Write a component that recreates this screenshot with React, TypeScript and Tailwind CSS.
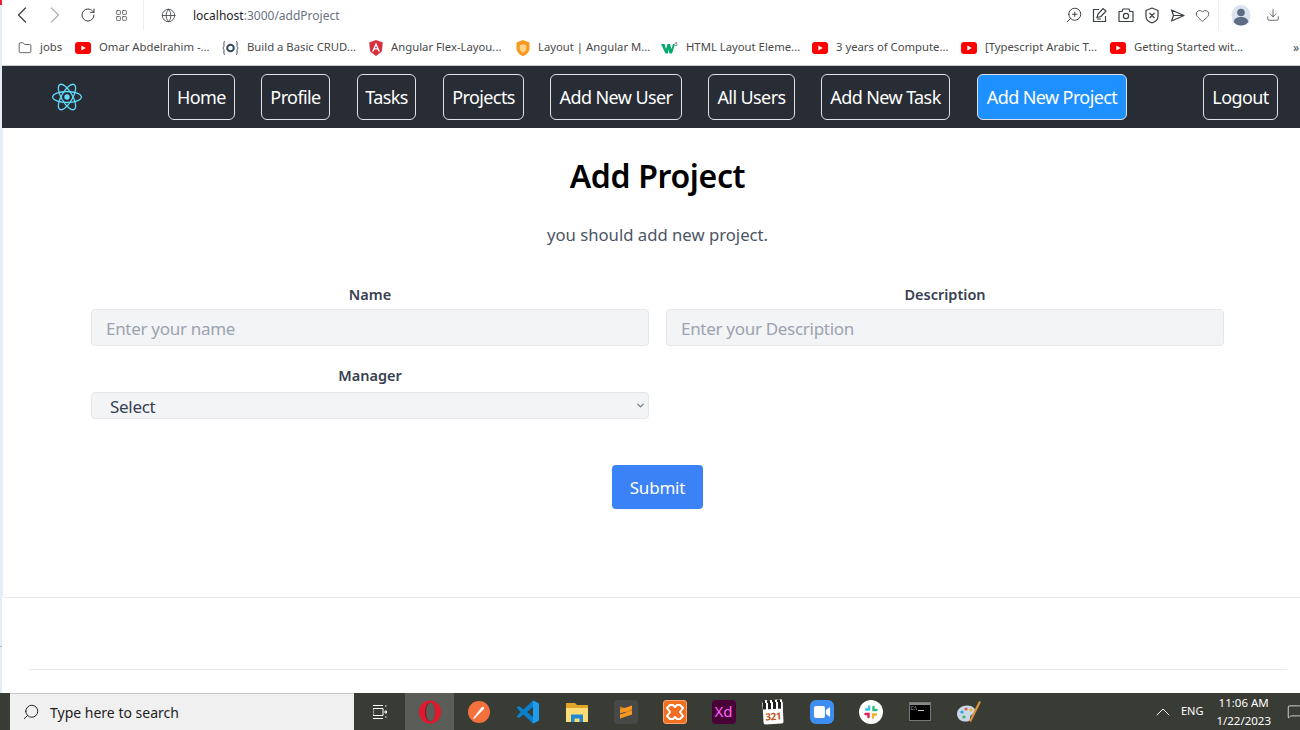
import React from "react";
import { ChevronLeft, ChevronRight, ChevronDown, RotateCw, LayoutGrid, Globe, Folder, ZoomIn, Heart, Download, Search, ChevronUp, MessageSquare } from "lucide-react";

const YT = () => (
  <svg width="16" height="12" viewBox="0 0 16 12" className="shrink-0">
    <rect width="16" height="12" rx="3" fill="#f00" />
    <path d="M6.3 3.4 10.8 6 6.3 8.6z" fill="#fff" />
  </svg>
);
const Crud = () => (
  <svg width="17" height="16" viewBox="0 0 17 16" className="shrink-0">
    <path d="M3 1.5C1.5 1.5 2 3 2 5.5 2 7 1.500 7.500.8 8c.7.500 1.200 1 1.200 2.500C2 13 1.500 14.500 3 14.500M14 1.500c1.500 0 1 1.500 1 4 0 1.500.5 2 1.200 2.500-.7.500-1.200 1-1.200 2.500 0 2.500.5 4-1 4" fill="none" stroke="#3c4858" strokeWidth="1" />
    <circle cx="8.500" cy="8" r="3.300" fill="none" stroke="#34495e" strokeWidth="2" />
  </svg>
);
const Ang = () => (
  <svg width="14" height="16" viewBox="0 0 14 16" className="shrink-0">
    <path d="M7 0 .2 2.400l1 9.200L7 16l5.800-4.400 1-9.200z" fill="#d6303c" />
    <path d="M7 2.500 3 11.500h1.600l.8-2h3.200l.8 2H11zM6 8.200l1-2.600 1 2.600z" fill="#fff" />
  </svg>
);
const Shield = () => (
  <svg width="14" height="16" viewBox="0 0 14 16" className="shrink-0">
    <path d="M7 0 .5 2.400v6C.5 12 4 15 7 16c3-1 6.500-4 6.500-7.600v-6z" fill="#f79a1f" />
    <path d="M7 4 3.800 5.500v3C3.800 10.500 5.500 12 7 12.500c1.500-.5 3.200-2 3.200-4v-3z" fill="#fcd58b" />
  </svg>
);
const W3 = () => (
  <svg width="17" height="12" viewBox="0 0 17 12" className="shrink-0">
    <path d="M0 2h3.500l1.500 5L6.500 2h2.500l1.500 5L12 2h2l-3 9.500H8.500L7.700 7.500 6.800 11.500H4.500z" fill="#04a96d" />
    <text x="13.500" y="4" fontSize="5" fill="#222" fontFamily="'Noto Sans',sans-serif">3</text>
  </svg>
);
const ReactLogo = () => (
  <svg width="30" height="30" viewBox="-11.500 -11.500 23 23" fill="none" stroke="#61dafb" strokeWidth="1">
    <circle r="2.050" fill="#61dafb" stroke="none" />
    <ellipse rx="11" ry="4.200" />
    <ellipse rx="11" ry="4.200" transform="rotate(60)" />
    <ellipse rx="11" ry="4.200" transform="rotate(120)" />
  </svg>
);

const bookmarks: [React.ReactNode, string, string][] = [
  [<Folder size={14} strokeWidth={1.300} color="#333" className="shrink-0" />, "jobs", "w-[57px]"],
  [<YT />, "Omar Abdelrahim -...", "w-[147px]"],
  [<Crud />, "Build a Basic CRUD...", "w-[147px]"],
  [<Ang />, "Angular Flex-Layou...", "w-[147px]"],
  [<Shield />, "Layout | Angular M...", "w-[145px]"],
  [<W3 />, "HTML Layout Eleme...", "w-[151px]"],
  [<YT />, "3 years of Compute...", "w-[149px]"],
  [<YT />, "[Typescript Arabic T...", "w-[149px]"],
  [<YT />, "Getting Started wit...", "w-[183px]"],
];

const navs: [string, string, string][] = [
  ["Home", "w-[67px]", "mr-[26px]"],
  ["Profile", "w-[69px]", "mr-[27px]"],
  ["Tasks", "w-[59px]", "mr-[27px]"],
  ["Projects", "w-[81px]", "mr-[26px]"],
  ["Add New User", "w-[132px]", "mr-[26px]"],
  ["All Users", "w-[87px]", "mr-[26px]"],
  ["Add New Task", "w-[129px]", "mr-[27px]"],
];

const Input = ({ label, ph }: { label: string; ph: string }) => (
  <div className="flex w-[558px] flex-col">
    <label className="mb-[5px] h-[20px] text-center text-[14.500px] font-semibold leading-[20px] text-[#374151]">{label}</label>
    <input
      readOnly
      placeholder={ph}
      className="h-[37px] w-full rounded-[4px] border border-[#e5e7eb] bg-[#f3f4f6] px-[14px] pt-[2px] text-[17px] tracking-[-0.3px] outline-none placeholder:text-[#9ca3af]"
    />
  </div>
);

const Tile = ({ children, active }: { children: React.ReactNode; active?: boolean }) => (
  <div className={`flex h-[37px] w-[49px] shrink-0 items-center justify-center ${active ? "bg-[#5b5d58]" : ""}`}>{children}</div>
);

export default function App() {
  return (
    <div className="relative flex h-[730px] w-[1300px] flex-col overflow-hidden bg-white font-['Noto_Sans',sans-serif]">
      <div className="absolute left-0 top-0 h-[5px] w-[2px] bg-[#ee1c3b]" />
      <div className="absolute left-0 top-[646px] h-px w-[2px] bg-[#b5b8bc]" />
      <div className="flex min-h-0 flex-1 flex-col border-l-[2px] border-[#e3edf7]">
        {/* toolbar */}
        <div className="flex h-[30px] shrink-0 items-center bg-white pl-[6px] pr-[20px] text-[#3c4043]">
          <ChevronLeft size={28} strokeWidth={1.100} />
          <ChevronRight size={28} strokeWidth={1.100} color="#b5b5b5" className="ml-[5px]" />
          <RotateCw size={16} strokeWidth={1.500} className="ml-[11px]" />
          <LayoutGrid size={13} strokeWidth={1.300} className="ml-[19px]" />
          <div className="ml-[15px] h-[30px] w-px bg-[#eee]" />
          <Globe size={15} strokeWidth={1.300} className="ml-[17px]" />
          <span className="ml-[17px] pt-[1px] text-[12px] text-[#222]">
            localhost<span className="text-[#6b7280]">:3000/addProject</span>
          </span>
          <div className="ml-auto flex items-center">
            <ZoomIn size={18} strokeWidth={1.300} className="-scale-x-100" />
            <svg width="16" height="16" viewBox="0 0 16 16" fill="none" stroke="#3c4043" strokeWidth="1.200" className="ml-[9px]">
              <path d="M7 2.500H1.500v12h12V9M5 10.500l1-3.500 5-5.500 3 2.500-5 5.500zM9 12H5" />
            </svg>
            <svg width="16" height="16" viewBox="0 0 16 16" fill="none" stroke="#3c4043" strokeWidth="1.200" className="ml-[10px]">
              <path d="M1 4.500h3l1-2.500h6l1 2.500h3v10H1z" strokeLinejoin="round" />
              <circle cx="8" cy="9" r="2.600" />
            </svg>
            <svg width="16" height="17" viewBox="0 0 16 17" fill="none" stroke="#3c4043" strokeWidth="1.200" className="ml-[10px]">
              <path d="M8 1 14 3.500v6c0 3-3 5.500-6 6.500-3-1-6-3.500-6-6.500v-6zM5.500 6 10.500 11M10.500 6 5.500 11" strokeLinejoin="round" />
            </svg>
            <svg width="15" height="15" viewBox="0 0 15 15" fill="none" stroke="#3c4043" strokeWidth="1.200" className="ml-[10px]">
              <path d="M1.500 2 14 7.500 1.500 13 3.500 7.500zM3.500 7.500H14" strokeLinejoin="round" />
            </svg>
            <Heart size={15} strokeWidth={1.300} className="ml-[10px]" />
            <div className="ml-[8px] h-[30px] w-px bg-[#eee]" />
            <svg width="20" height="21" viewBox="0 0 20 21" className="ml-[12px]">
              <ellipse cx="10" cy="10.500" rx="9.500" ry="10.500" fill="#dbe3ef" />
              <circle cx="10" cy="7.500" r="3.800" fill="#5f6d82" />
              <path d="M2.500 17c1-4 4-5 7.500-5s6.500 1 7.500 5c-2 2.500-4.500 3.500-7.500 3.500S4.500 19.500 2.500 17z" fill="#5f6d82" />
            </svg>
            <Download size={14} strokeWidth={1.300} className="ml-[15px]" />
          </div>
        </div>
        {/* bookmarks */}
        <div className="flex h-[36px] shrink-0 items-center overflow-hidden border-b border-[#c9ccd1] bg-white pl-[16px] text-[11.300px] text-[#4a4a4a]">
          {bookmarks.map(([ic, t, w]) => (
            <div key={t} className={`flex shrink-0 items-center gap-[8px] whitespace-nowrap ${w}`}>
              {ic}
              <span>{t}</span>
            </div>
          ))}
          <span className="text-[12px] text-[#444]">»</span>
        </div>
        {/* nav */}
        <nav className="flex h-[62px] shrink-0 items-center bg-[#282c34] text-[18px] tracking-[-0.6px] text-white">
          <div className="ml-[50px] mr-[86px] flex w-[30px] justify-center">
            <ReactLogo />
          </div>
          {navs.map(([t, w, m]) => (
            <button key={t} className={`h-[46px] whitespace-nowrap rounded-[6px] border border-[#dee2e6] ${w} ${m}`}>{t}</button>
          ))}
          <button className="h-[46px] w-[150px] whitespace-nowrap rounded-[6px] border border-[#dee2e6] bg-[#1e90ff]">Add New Project</button>
          <button className="ml-[76px] h-[46px] w-[75px] rounded-[6px] border border-[#dee2e6]">Logout</button>
        </nav>
        {/* content */}
        <main className="h-[470px] shrink-0 rounded-bl-[4px] border-b border-l border-[#e5e7eb] border-l-[#e3edf7] bg-white">
          <div className="ml-[88px] flex w-[1133px] flex-col">
            <h1 className="mt-[25px] h-[45px] text-center text-[32px] font-semibold leading-[45px] tracking-[-0.35px] text-black">Add Project</h1>
            <p className="mt-[25px] h-[24px] text-center text-[16.700px] leading-[24px] text-[#4b5563]">you should add new project.</p>
            <div className="mt-[37px] flex gap-[17px]">
              <Input label="Name" ph="Enter your name" />
              <Input label="Description" ph="Enter your Description" />
            </div>
            <div className="mt-[19px] flex w-[558px] flex-col">
              <label className="mb-[7px] h-[20px] text-center text-[14.500px] font-semibold leading-[20px] text-[#374151]">Manager</label>
              <div className="relative">
                <select className="block h-[27px] w-full appearance-none rounded-[4px] border border-[#e5e7eb] bg-[#f3f4f6] pl-[18px] pt-[1px] text-[17px] tracking-[-0.3px] text-[#374151] outline-none">
                  <option>Select</option>
                </select>
                <ChevronDown size={11} strokeWidth={2.500} color="#6b7280" className="pointer-events-none absolute right-[3px] top-[8px]" />
              </div>
            </div>
            <button className="mx-auto mt-[46px] h-[44px] w-[91px] rounded-[4px] bg-[#3b82f6] pt-[2px] text-[17px] tracking-[-0.2px] text-white">Submit</button>
          </div>
        </main>
        {/* below */}
        <div className="flex min-h-0 flex-1 flex-col bg-white">
          <div className="ml-[27px] mr-[13px] mt-[71px] h-px bg-[#e5e7eb]" />
        </div>
      </div>
      {/* taskbar */}
      <footer className="flex h-[37px] shrink-0 items-center bg-[#393b35] text-white">
        <div className="ml-[10px] flex h-[37px] w-[344px] items-center border-t border-[#c8c8c8] bg-[#f0f0f0] text-[#222]">
          <Search size={18} strokeWidth={1.300} className="ml-[12px] -scale-x-100" />
          <span className="ml-[10px] text-[14px]">Type here to search</span>
        </div>
        <div className="ml-[16px] flex h-[37px] w-[19px] items-center justify-center">
          <svg width="14" height="14" viewBox="0 0 14 14" fill="none" stroke="#fff" strokeWidth="1">
            <path d="M0 .5h10M0 13.500h10M0 3.500h10v7H0zM12 1h1.500M12 6h1.500v2H12zM12 12h1.500" />
          </svg>
        </div>
        <div className="ml-[16px] flex">
          <Tile active>
            <svg width="24" height="24" viewBox="0 0 24 24">
              <ellipse cx="12" cy="12" rx="11" ry="11.500" fill="#e3182d" />
              <ellipse cx="12" cy="12" rx="5" ry="9.500" fill="#6b1a20" />
              <ellipse cx="12.500" cy="12" rx="4.500" ry="9.500" fill="#5b5d58" />
            </svg>
          </Tile>
          <Tile>
            <svg width="22" height="22" viewBox="0 0 22 22"><circle cx="11" cy="11" r="11" fill="#f4703c" /><path d="M5 17.500 13 7l2-1.500 1.500 1.500-1.500 2-9 9z" fill="#fff" /><path d="M14 4l4 4" stroke="#f4703c" strokeWidth="1" /></svg>
          </Tile>
          <Tile>
            <svg width="24" height="24" viewBox="0 0 24 24"><path d="M17 .5 7.500 9.500 3 6 .5 7.500 4.500 12l-4 4.500L3 18l4.500-3.500 9.500 9 6-3V3.500z" fill="#0a7fcb" /><path d="M17 .5 23 3.500V20.500l-6 3z" fill="#1f9cf0" /><path d="M17 7v10l-6-5z" fill="#393b35" /></svg>
          </Tile>
          <Tile>
            <svg width="22" height="20" viewBox="0 0 22 20"><path d="M0 1h9l2 2h11v17H0z" fill="#e0a528" /><path d="M0 6h22v14H0z" fill="#fbdc75" /><path d="M5 12.500h12V20h-3.500v-3.500h-5V20H5z" fill="#1e88d2" /></svg>
          </Tile>
          <Tile>
            <div className="flex h-[24px] w-[24px] items-center justify-center rounded-[3px] bg-[#484848]">
              <svg width="14" height="16" viewBox="0 0 14 16" fill="#f89820"><path d="M1 5.500 13 1.500v4L1 9.500z" /><path d="M1 6.500 13 10.500v-4L1 2.500z" opacity=".75" /><path d="M1 10.500 13 6.500v4l-12 4z" /></svg>
            </div>
          </Tile>
          <Tile>
            <div className="flex h-[24px] w-[24px] items-center justify-center rounded-[3px] border border-[#f9a46d] bg-[#f26f21]">
              <svg width="18" height="16" viewBox="0 0 18 16" fill="none" stroke="#fff" strokeWidth="2" strokeLinejoin="round">
                <path d="M4 1h3l2 2 2-2h3l3 3-3 4 3 4-3 3h-3l-2-2-2 2H4l-3-3 3-4-3-4z" />
              </svg>
            </div>
          </Tile>
          <Tile>
            <div className="flex h-[24px] w-[24px] items-center justify-center rounded-[4px] bg-[#470137] text-[15px] leading-none text-[#ff61f6]">Xd</div>
          </Tile>
          <Tile>
            <div className="flex h-[24px] w-[20px] -rotate-3 flex-col items-center rounded-[2px] bg-white">
              <div className="h-[9px] w-full bg-[repeating-linear-gradient(90deg,#222_0,#222_3px,#fff_3px,#fff_5px)]" />
              <span className="text-[10px] font-bold leading-[14px] tracking-[-0.5px] text-[#c0561d]">321</span>
            </div>
          </Tile>
          <Tile>
            <div className="flex h-[24px] w-[24px] items-center justify-center rounded-[6px] bg-[#3d8df2]">
              <svg width="16" height="12" viewBox="0 0 16 12"><rect width="11" height="12" rx="2" fill="#fff" /><path d="M12 4l4-3v10l-4-3z" fill="#fff" /></svg>
            </div>
          </Tile>
          <Tile>
            <div className="flex h-[24px] w-[24px] items-center justify-center rounded-full bg-white">
              <svg width="14" height="14" viewBox="0 0 14 14" strokeWidth="2.400" strokeLinecap="round">
                <path d="M5 1.500v3H2" stroke="#36c5f0" fill="none" />
                <path d="M12.500 5h-3V2" stroke="#2eb67d" fill="none" />
                <path d="M9 12.500v-3h3" stroke="#ecb22e" fill="none" />
                <path d="M1.500 9h3v3" stroke="#e01e5a" fill="none" />
              </svg>
            </div>
          </Tile>
          <Tile>
            <div className="h-[19px] w-[22px] border border-[#777] bg-black">
              <div className="h-[2px] bg-[#888]" />
              <div className="ml-[1px] flex items-end gap-[1px]">
                <span className="text-[5px] leading-[7px] text-[#ccc]">C:\</span>
                <div className="mb-[1px] h-px w-[6px] bg-[#ccc]" />
              </div>
            </div>
          </Tile>
          <Tile>
            <svg width="26" height="24" viewBox="0 0 26 24">
              <path d="M1 14C1 7 9 4 15 6c5 2 6 7 2 8-3 1-3 3-3 5 0 3-5 3-8 2-3-1-5-4-5-7z" fill="#c8d8e8" />
              <circle cx="6" cy="12" r="1.600" fill="#2e9fd6" /><circle cx="10" cy="9" r="1.600" fill="#e2574c" /><circle cx="15" cy="10" r="1.600" fill="#f2b134" /><circle cx="8" cy="17" r="1.600" fill="#4caf50" />
              <path d="M23 1 25 2 15 22l-2-1z" fill="#e0913a" />
            </svg>
          </Tile>
        </div>
        <div className="ml-auto flex items-center">
          <ChevronUp size={24} strokeWidth={1} />
          <span className="ml-[6px] text-[11px]">ENG</span>
          <div className="ml-[13px] flex flex-col items-center text-[11.500px] leading-[18px]">
            <span>11:06 AM</span>
            <span>1/22/2023</span>
          </div>
          <MessageSquare size={15} strokeWidth={1.200} className="ml-[16px] mr-[-2px]" />
        </div>
      </footer>
    </div>
  );
}
